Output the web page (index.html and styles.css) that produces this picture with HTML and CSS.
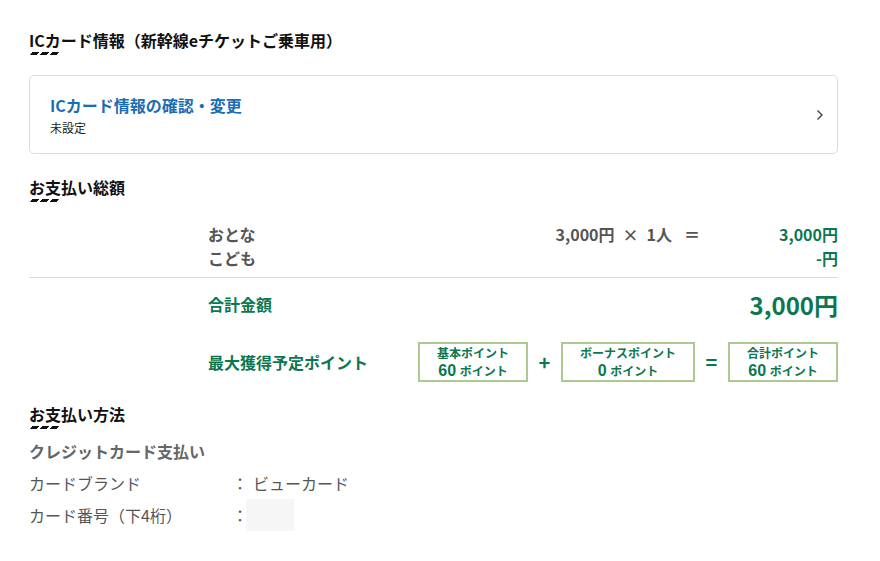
FILE: index.html
```html
<!DOCTYPE html>
<html lang="ja">
<head>
<meta charset="utf-8">
<link rel="stylesheet" href="styles.css">
</head>
<body>
<main class="page">
  <h2 class="heading heading-first">ICカード情報（新幹線eチケットご乗車用）</h2>
  <a class="card" href="#">
    <div class="card-body">
      <div class="card-title">ICカード情報の確認・変更</div>
      <div class="card-sub">未設定</div>
    </div>
    <svg class="chevron" width="8" height="12" viewBox="0 0 8 12"><path d="M1.5 1.5 L6 6 L1.5 10.5" fill="none" stroke="#444" stroke-width="1.4"/></svg>
  </a>

  <h2 class="heading heading-pay">お支払い総額</h2>
  <div class="fare">
    <div class="fare-row">
      <span class="fare-label">おとな</span>
      <span class="fare-calc"><span>3,000円</span><span class="times">×</span><span>1人</span><span class="eq">＝</span></span>
      <span class="fare-amount">3,000円</span>
    </div>
    <div class="fare-row">
      <span class="fare-label">こども</span>
      <span class="fare-calc"></span>
      <span class="fare-amount">-円</span>
    </div>
  </div>
  <div class="total">
    <span class="total-label">合計金額</span>
    <span class="total-amount">3,000円</span>
  </div>
  <div class="points">
    <span class="points-label">最大獲得予定ポイント</span>
    <div class="points-calc">
      <div class="pbox pbox-narrow"><div class="pbox-name">基本ポイント</div><div class="pbox-val"><span class="num">60</span> ポイント</div></div>
      <span class="op">+</span>
      <div class="pbox pbox-wide"><div class="pbox-name">ボーナスポイント</div><div class="pbox-val"><span class="num">0</span> ポイント</div></div>
      <span class="op">=</span>
      <div class="pbox pbox-narrow"><div class="pbox-name">合計ポイント</div><div class="pbox-val"><span class="num">60</span> ポイント</div></div>
    </div>
  </div>

  <h2 class="heading heading-method">お支払い方法</h2>
  <div class="method-title">クレジットカード支払い</div>
  <dl class="method">
    <div class="method-row"><dt>カードブランド</dt><dd><span class="colon">：</span><span class="mval">ビューカード</span></dd></div>
    <div class="method-row"><dt>カード番号（下4桁）</dt><dd><span class="colon">：</span><span class="mask"></span></dd></div>
  </dl>
</main>
</body>
</html>
```

FILE: styles.css
```css
* { box-sizing: border-box; }
html, body { margin: 0; padding: 0; background: #fff; }
body {
  font-family: "Noto Sans CJK JP", "Noto Sans", sans-serif;
  color: #222;
}
.page {
  width: 809px;
  margin-left: 29px;
  padding-top: 30px;
}
.heading {
  margin: 0;
  font-size: 16px;
  line-height: 20px;
  font-weight: 700;
  color: #111;
}
.heading::after {
  content: "";
  display: block;
  width: 27px;
  height: 3px;
  margin: 2px 0 0 2px;
  background: repeating-linear-gradient(90deg, #111 0 7px, transparent 7px 10px);
  transform: skewX(-35deg);
}
.card {
  display: flex;
  align-items: center;
  margin-top: 20px;
  height: 79px;
  padding: 18px 13px 16px 20px;
  border: 1px solid #dcdcdc;
  border-radius: 5px;
  text-decoration: none;
}
.card-body { flex: 1; }
.card-title {
  font-size: 16px;
  line-height: 22px;
  font-weight: 700;
  color: #1b6db3;
}
.card-sub {
  margin-top: 3px;
  font-size: 12px;
  line-height: 18px;
  color: #222;
}
.chevron { margin-top: -2px; }
.heading-pay { margin-top: 23px; }
.fare {
  margin-top: 20px;
  padding-bottom: 7px;
  border-bottom: 1px solid #dcdcdc;
}
.fare-row {
  display: grid;
  grid-template-columns: 179px 1fr auto 138px;
  font-size: 16px;
  line-height: 24px;
  font-weight: 700;
  color: #555;
}
.fare-label { grid-column: 2; }
.fare-calc { grid-column: 3; }
.times { margin: 0 8px 0 8px; }
.eq { margin-left: 12px; }
.fare-amount { grid-column: 4; text-align: right; color: #0b7750; }
.total {
  display: flex;
  align-items: center;
  margin-top: 8px;
  height: 36px;
  padding-left: 179px;
  color: #0b7750;
  font-weight: 700;
}
.total-label { flex: 1; font-size: 16px; }
.total-amount { font-size: 24px; }
.points {
  display: flex;
  align-items: center;
  margin-top: 20px;
  padding-left: 179px;
  color: #0b7750;
  font-weight: 700;
}
.points-label { flex: 1; font-size: 16px; }
.points-calc { display: flex; align-items: center; }
.pbox {
  height: 40px;
  border: 2px solid #acc98f;
  text-align: center;
  font-size: 12px;
  padding-top: 0;
}
.pbox-narrow { width: 110px; }
.pbox-wide { width: 134px; }
.pbox-name { line-height: 18px; }
.pbox-val { line-height: 18px; }
.num {
  font-family: "Liberation Sans", Arial, sans-serif;
  font-size: 16px;
  margin-right: 1px;
}
.op {
  width: 33px;
  text-align: center;
  font-size: 20px;
  line-height: 24px;
  font-weight: 700;
}
.heading-method { margin-top: 22px; }
.method-title {
  margin-top: 10px;
  font-size: 16px;
  line-height: 24px;
  font-weight: 700;
  color: #666;
}
.method { margin: 4px 0 0; }
.method-row {
  display: flex;
  align-items: center;
  height: 32px;
  font-size: 16px;
  color: #555;
}
.method-row dt { width: 203px; }
.method-row dd { margin: 0; display: flex; align-items: center; }
.colon { width: 14px; }
.mval { margin-left: 7px; }
.mask {
  display: block;
  width: 48px;
  height: 32px;
  background: #f6f6f6;
}
```
